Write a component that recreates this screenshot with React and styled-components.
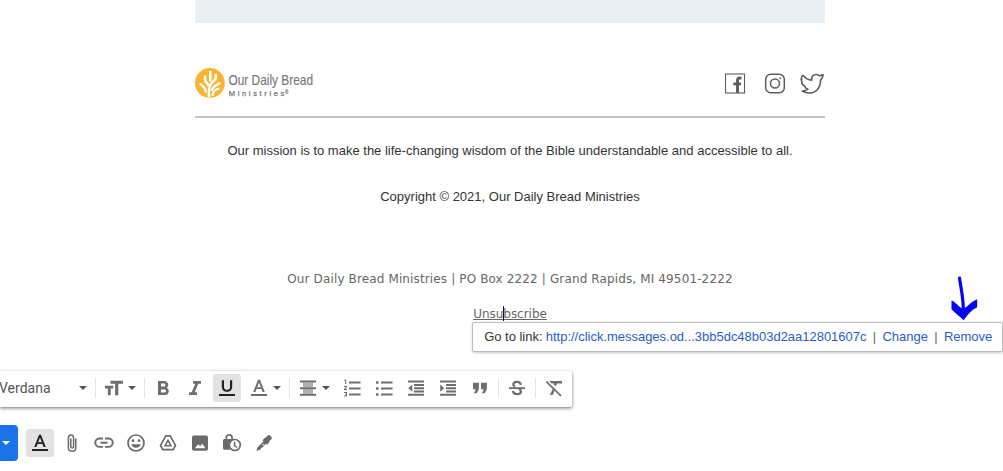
import styled, { createGlobalStyle } from "styled-components";

const GlobalStyle = createGlobalStyle`
  body {
    margin: 0;
    background: #fff;
    overflow: hidden;
  }
`;

const icons = {
  size: (
    <path d="M8.500 4.700h12.500v3h-4.700v11.600h-3.200V7.700H8.500zM3 9.800h8.300v2.700H8.700v6.800H5.900v-6.800H3z" />
  ),
  bold: (
    <path d="M15.600 11.790c.970-.670 1.650-1.770 1.650-2.790 0-2.260-1.750-4-4-4H7v14h7.040c2.090 0 3.710-1.700 3.710-3.790 0-1.520-.860-2.820-2.150-3.420zM10 7.500h3c.830 0 1.500.670 1.500 1.500s-.670 1.500-1.500 1.500h-3v-3zm3.500 9H10v-3h3.500c.830 0 1.500.670 1.500 1.500s-.670 1.500-1.500 1.500z" />
  ),
  italic: <path d="M10 5v2.800h2.300l-3.600 8.400H6V19h8v-2.800h-2.300l3.600-8.400H18V5z" />,
  underline: (
    <path d="M12 15.800c3 0 5.200-2 5.200-5V4.200H15v6.700c0 1.800-1.200 2.900-3 2.900s-3-1.100-3-2.900V4.200H6.800v6.600c0 3 2.200 5 5.200 5zM4 18h16v2H4z" />
  ),
  color: (
    <path d="M11 3.800 6.200 15.900h2.200l1.100-2.800h5l1.100 2.800h2.200L13 3.800zm-.8 7.400L12 6.500l1.800 4.700zM4 18h16v2H4z" />
  ),
  align: (
    <>
      <path d="M4 4.500h16v2H4zM4 11.200h16v2H4zM4 17.800h16v2H4z" />
      <path d="M7 6.500h10v4.700H7zM7 13.200h10v4.600H7z" opacity=".55" />
    </>
  ),
  numbered: (
    <path d="M9 5.500h11.500v2H9zm0 6h11.500v2H9zm0 6h11.500v2H9zM4.200 3.700h2V8h-1V4.700h-1zM4 10h3v1l-1.800 2H7v1H4v-1l1.800-2H4zm0 6h3v4.500H4v-1h2v-.700H5v-1h1V17H4z" />
  ),
  bullets: (
    <path d="M9 5.500h11.500v2H9zm0 6h11.500v2H9zm0 6h11.500v2H9zM4 5.200h2.500v2.500H4zm0 6h2.500v2.500H4zm0 6h2.500v2.500H4z" />
  ),
  outdent: (
    <path d="M4 4.500h16v2H4zm6 3.400h10v2H10zm0 3.300h10v2H10zm0 3.300h10v2H10zM4 17.800h16v2H4zM8.300 8.500v7.300L4.300 12.200z" />
  ),
  indent: (
    <path d="M4 4.500h16v2H4zm6 3.400h10v2H10zm0 3.300h10v2H10zm0 3.300h10v2H10zM4 17.800h16v2H4zM4.200 8.500v7.300l4-3.600z" />
  ),
  quote: (
    <path d="M5 6.800h5.900v6.100L8.700 17.300H5.900l1.900-4H5zM13 6.800h5.900v6.100l-2.200 4.400h-2.800l1.900-4H13z" />
  ),
  strike: (
    <>
      <path d="M4 11.200h16v1.900H4z" />
      <path
        d="M15.800 8.800C15.600 7 14.300 5.800 12 5.800c-2.200 0-3.700 1-3.700 2.700 0 1 .600 1.800 1.800 2.300M13.800 13c1.500.500 2.200 1.200 2.200 2.400 0 1.700-1.500 2.700-3.900 2.700-2.500 0-4-1.200-4.100-3.200"
        fill="none"
        stroke="currentColor"
        strokeWidth="2.200"
      />
    </>
  ),
  clear: (
    <path d="M7 5h13v2.600h-5l-1.200 2.800-2-2 .4-.8h-2.600zM4.900 5l14.700 14.300-1.200 1.200-5.800-5.700-1.900 4.300H8l2.700-6.200-7-6.700z" />
  ),
  clip: (
    <path
      d="M15.800 7.500v8.900c0 2.300-1.600 3.900-3.700 3.900s-3.700-1.600-3.700-3.900V6.800c0-1.700 1.100-2.800 2.600-2.800s2.600 1.100 2.600 2.800v8.800c0 1-.600 1.500-1.400 1.500s-1.400-.500-1.400-1.500V7.500"
      fill="none"
      stroke="currentColor"
      strokeWidth="1.500"
    />
  ),
  link: (
    <path
      d="M11 7.500H7.500a4.200 4.200 0 0 0 0 8.400H11M13 7.500h3.500a4.200 4.200 0 0 1 0 8.400H13M8.500 11.700h7"
      fill="none"
      stroke="currentColor"
      strokeWidth="1.900"
    />
  ),
  smile: (
    <>
      <circle cx="12" cy="12" r="8" fill="none" stroke="currentColor" strokeWidth="1.700" />
      <circle cx="9" cy="9.700" r="1.400" />
      <circle cx="15" cy="9.700" r="1.400" />
      <path d="M7.200 13.300h9.600c-.700 2-2.500 3.400-4.800 3.400s-4.100-1.400-4.800-3.400z" />
    </>
  ),
  drive: (
    <>
      <path
        d="M9.800 4.900h4.400L19.500 14.300l-2.200 4.400H6.700l-2.200-4.400z"
        fill="none"
        stroke="currentColor"
        strokeWidth="1.700"
        strokeLinejoin="round"
      />
      <path
        d="M12 9.400l2.900 5.300H9.100z"
        fill="none"
        stroke="currentColor"
        strokeWidth="1.600"
      />
    </>
  ),
  image: (
    <path
      fillRule="evenodd"
      d="M6 4.500h12c1.100 0 2 .9 2 2v11.300c0 1.100-.9 2-2 2H6c-1.100 0-2-.9-2-2V6.500c0-1.100.9-2 2-2zm.8 12.700h10.700l-3.300-4.500-2 2.500-2-1.900z"
    />
  ),
  confidential: (
    <>
      <path
        d="M6.300 9V6.700C6.300 4.900 7.500 3.800 9.200 3.800s2.900 1.100 2.900 2.900V9"
        fill="none"
        stroke="currentColor"
        strokeWidth="1.700"
      />
      <path d="M4.500 8h9.600v1.200a6 6 0 0 0-3.700 9.500H4.500A1.500 1.500 0 0 1 3 17.200V9.500A1.500 1.500 0 0 1 4.500 8z" />
      <circle cx="14.800" cy="14" r="5.500" fill="#fff" stroke="currentColor" strokeWidth="1.700" />
      <path
        d="M14.500 10.800v3.700l2.500 1.800"
        fill="none"
        stroke="currentColor"
        strokeWidth="1.500"
      />
    </>
  ),
  pen: (
    <path
      fillRule="evenodd"
      d="M13.600 6.700l2.200-2.200c.8-.8 2-.3 2.400.2l1.100 1.100c.7.700.7 1.600 0 2.400l-2.200 2.200.5.600-2.600 2.700-1.100-1-5.300 5.400c-1 1-2.500 1.500-4 1.600.1-1.500.6-3 1.600-4l5.300-5.400-1-1 2.600-2.700zM11 12.700l-.9.900 1 1 .9-.9z"
    />
  ),
};

function Icon({ name }) {
  return (
    <IconSvg viewBox="0 0 24 24" fill="currentColor">
      {icons[name]}
    </IconSvg>
  );
}

function Caret() {
  return (
    <CaretSvg viewBox="0 0 8 4" fill="currentColor">
      <path d="M0 0h8L4 4z" />
    </CaretSvg>
  );
}

function Logo() {
  return (
    <LogoSvg width="150" height="36" viewBox="195 67 150 36">
      <circle cx="209.900" cy="83" r="14.900" fill="#fab431" />
      <g fill="none" stroke="#fff" strokeWidth="2.600">
        <path d="M210.300 71v10.500" />
        <path d="M205 75.500v4c0 2.500 2.800 3.500 3.500 6.500" />
        <path d="M215.800 74v3.500c0 3.500-5.800 4.500-6.600 10.500-.3 2.500-.3 5-.2 9.500" />
        <path d="M200 83.500c1.800 2.500 5.500 2.800 6 9" strokeWidth="2.300" />
        <path d="M220 82.500c-2.500 3.500-7.700 3-8.200 8.500" strokeWidth="2.300" />
        <path d="M219.500 88.500c-3.800.5-6.500 2.500-7.100 7.500" strokeWidth="2" />
      </g>
      <LogoText x="228.500" y="84.500" textLength="84.500" lengthAdjust="spacingAndGlyphs" $size="14.500">
        Our Daily Bread
      </LogoText>
      <LogoText x="228.800" y="96" textLength="55.500" $size="7.500" $small>
        Ministries
      </LogoText>
      <LogoText x="285" y="94" $size="4.500">
        ®
      </LogoText>
    </LogoSvg>
  );
}

function SocialLinks() {
  return (
    <svg width="101" height="24" viewBox="724 71 101 24">
      <g fill="none" stroke="#5c5c5c">
        <rect x="725.500" y="74" width="19" height="19" strokeWidth="1.100" />
        <path
          d="M741.500 78h-1.700c-1.600 0-2.300.900-2.300 2.600V93M733.300 83.900h7.700"
          strokeWidth="2.900"
        />
        <rect x="765.700" y="74.200" width="18.600" height="18.600" rx="5" strokeWidth="1.500" />
        <circle cx="775" cy="83.500" r="4.500" strokeWidth="1.500" />
        <circle cx="780.300" cy="78.300" r=".6" strokeWidth="1" />
        <path
          d="M803.200 75.500c2.300 2.900 5 4.500 8.500 4.700-.400-3.400 1.500-5.700 4.300-5.700 1.500 0 2.600.4 3.400 1.300l3.700-.9-1 3.200-1.600 2.400c.2 7.300-4.700 12.500-11.200 12.500-2.600 0-4.900-.6-7-1.900 2.300-.2 4.200-.8 5.700-1.900-1.900-.5-3-1.500-3.300-3-2-1-3-2.500-3-4.600-.6-1.800-.5-4.200.5-6.100z"
          strokeWidth="1.600"
          strokeLinejoin="round"
        />
      </g>
    </svg>
  );
}

function FormatToolbar() {
  return (
    <Toolbar>
      <FontSelect>
        <FontName>Verdana</FontName>
        <Caret />
      </FontSelect>
      <Divider />
      <ToolMenu $width={48}>
        <Icon name="size" />
        <Caret />
      </ToolMenu>
      <Divider $after={2} />
      <Tool><Icon name="bold" /></Tool>
      <Tool><Icon name="italic" /></Tool>
      <Tool $active><Icon name="underline" /></Tool>
      <ToolMenu $width={46}>
        <Icon name="color" />
        <Caret />
      </ToolMenu>
      <Divider />
      <ToolMenu $width={46} $right={6}>
        <Icon name="align" />
        <Caret />
      </ToolMenu>
      {["numbered", "bullets", "outdent", "indent", "quote"].map((name) => (
        <Tool key={name}><Icon name={name} /></Tool>
      ))}
      <Divider $before={2} $after={2} />
      <Tool><Icon name="strike" /></Tool>
      <Divider $before={2} $after={2} />
      <Tool><Icon name="clear" /></Tool>
    </Toolbar>
  );
}

function App() {
  return (
    <Page>
      <GlobalStyle />
      <Email>
        <Banner />
        <Header>
          <Logo />
          <SocialLinks />
        </Header>
        <Mission>
          Our mission is to make the life-changing wisdom of the Bible
          understandable and accessible to all.
        </Mission>
        <Copyright>Copyright © 2021, Our Daily Bread Ministries</Copyright>
        <Address>
          Our Daily Bread Ministries | PO Box 2222 | Grand Rapids, MI 49501-2222
        </Address>
        <UnsubscribeRow>
          <Unsubscribe>
            Unsubscribe
            <TextCursor />
            <LinkPopup>
              <GoTo>Go to link:</GoTo>
              <PopupLink>
                http://click.messages.od...3bb5dc48b03d2aa12801607c
              </PopupLink>
              <Bar>|</Bar>
              <PopupLink>Change</PopupLink>
              <Bar>|</Bar>
              <PopupLink>Remove</PopupLink>
              <Arrow viewBox="0 0 30 45">
                <path
                  d="M9.500 2c1.500 11 4.500 22 3.800 36"
                  fill="none"
                  stroke="#0404f5"
                  strokeWidth="3.200"
                  strokeLinecap="round"
                />
                <path
                  d="M1.500 24.500c3.500 1 6.500 5.700 11.700 8.700 4-2.500 8-7.500 14-10v8c-5 2-9.200 7-13.500 13C10 40.500 5.500 37.500 1.500 33.300z"
                  fill="#0404f5"
                />
              </Arrow>
            </LinkPopup>
          </Unsubscribe>
        </UnsubscribeRow>
      </Email>
      <FormatToolbar />
      <ComposeBar>
        <SendMenu>
          <Caret />
        </SendMenu>
        <Tool $active><Icon name="color" /></Tool>
        {["clip", "link", "smile", "drive", "image", "confidential", "pen"].map(
          (name) => (
            <Tool key={name}><Icon name={name} /></Tool>
          )
        )}
      </ComposeBar>
    </Page>
  );
}

export default App;

const Page = styled.div`
  width: 1003px;
  height: 471px;
  overflow: hidden;
  display: flex;
  flex-direction: column;
  background: #fff;
`;

const Email = styled.div`
  width: 630px;
  height: 371px;
  flex: none;
  margin-left: 195px;
  font-family: "Liberation Sans", Arial, sans-serif;
`;

const Banner = styled.div`
  height: 23px;
  background: #eaeff4;
`;

const Header = styled.div`
  height: 93px;
  display: flex;
  align-items: flex-start;
  justify-content: space-between;
  border-bottom: 2px solid #c2c2c2;

  > svg:first-child {
    margin-top: 44px;
  }
  > svg:last-child {
    margin-top: 48px;
  }
`;

const Line = styled.div`
  line-height: 20px;
  text-align: center;
  white-space: nowrap;
`;

const Mission = styled(Line)`
  margin-top: 23px;
  font-size: 13px;
  color: #333;
`;

const Copyright = styled(Mission)`
  margin-top: 26px;
`;

const Address = styled(Line)`
  margin-top: 62px;
  font-family: "DejaVu Sans", Verdana, sans-serif;
  font-size: 12px;
  letter-spacing: 0.13px;
  color: #666;
`;

const UnsubscribeRow = styled(Address)`
  margin-top: 15px;
  letter-spacing: -0.03px;
`;

const Unsubscribe = styled.span`
  position: relative;
  text-decoration: underline;
`;

const TextCursor = styled.span`
  position: absolute;
  left: 30px;
  top: -1px;
  width: 1px;
  height: 15px;
  background: #111;
`;

const LinkPopup = styled.div`
  position: absolute;
  left: -1px;
  top: 15px;
  width: 531px;
  height: 30px;
  box-sizing: border-box;
  padding: 0 10px 0 11px;
  display: flex;
  align-items: center;
  justify-content: space-between;
  background: #fff;
  border: 1px solid #bbb;
  border-radius: 2px;
  box-shadow: 0 1px 3px rgba(0, 0, 0, 0.2);
  font-family: "Liberation Sans", Arial, sans-serif;
  font-size: 13px;
  letter-spacing: -0.02px;
  color: #333;
`;

const GoTo = styled.span`
  margin-right: -3px;
`;

const PopupLink = styled.span`
  color: #2a5bcb;
`;

const Bar = styled.span`
  color: #666;
`;

const Arrow = styled.svg`
  position: absolute;
  left: 477px;
  top: -47px;
  width: 30px;
  height: 45px;
`;

const LogoSvg = styled.svg`
  overflow: visible;
`;

const LogoText = styled.text`
  font-family: "Liberation Sans Narrow", "Liberation Sans", sans-serif;
  font-size: ${(props) => props.$size}px;
  fill: #77787b;
  stroke: #77787b;
  stroke-width: ${(props) => (props.$small ? 0.25 : 0.15)};
`;

const Toolbar = styled.div`
  width: 572px;
  height: 36px;
  box-sizing: border-box;
  padding-bottom: 2px;
  flex: none;
  display: flex;
  align-items: center;
  background: #fff;
  border-radius: 0 2px 2px 0;
  box-shadow: 0 1px 3px rgba(0, 0, 0, 0.45), 0 2px 5px rgba(0, 0, 0, 0.15);
  color: #6e6e6e;
`;

const IconSvg = styled.svg`
  width: 24px;
  height: 24px;
  flex: none;
  display: block;
`;

const CaretSvg = styled.svg`
  width: 8px;
  height: 4px;
  flex: none;
  display: block;
  color: #555;
`;

const FontSelect = styled.div`
  width: 95px;
  box-sizing: border-box;
  padding-right: 8px;
  display: flex;
  align-items: center;
  justify-content: space-between;
`;

const FontName = styled.span`
  margin-left: -1px;
  font-family: Roboto, sans-serif;
  font-size: 14px;
  line-height: 20px;
  color: #555;
`;

const Divider = styled.div`
  width: 1px;
  height: 20px;
  flex: none;
  margin-left: ${(props) => props.$before || 0}px;
  margin-right: ${(props) => props.$after || 0}px;
  background: #e6e6e6;
`;

const Tool = styled.div`
  width: 28px;
  height: 28px;
  flex: none;
  margin: 0 2px;
  display: flex;
  align-items: center;
  justify-content: center;
  border-radius: 3px;
  background: ${(props) => (props.$active ? "#e2e2e2" : "transparent")};
  color: ${(props) => (props.$active ? "#222" : "inherit")};
`;

const ToolMenu = styled.div`
  width: ${(props) => props.$width}px;
  box-sizing: border-box;
  padding-right: ${(props) => props.$right || 8}px;
  display: flex;
  align-items: center;
  justify-content: flex-end;
  gap: 2px;
`;

const ComposeBar = styled.div`
  height: 36px;
  margin-top: 18px;
  display: flex;
  align-items: center;
  color: #6a6a6a;
`;

const SendMenu = styled.div`
  width: 18px;
  height: 36px;
  box-sizing: border-box;
  padding-left: 2px;
  margin-right: 6px;
  display: flex;
  align-items: center;
  background: #1a73e8;
  border-radius: 0 4px 4px 0;

  ${CaretSvg} {
    color: #fff;
  }
`;
